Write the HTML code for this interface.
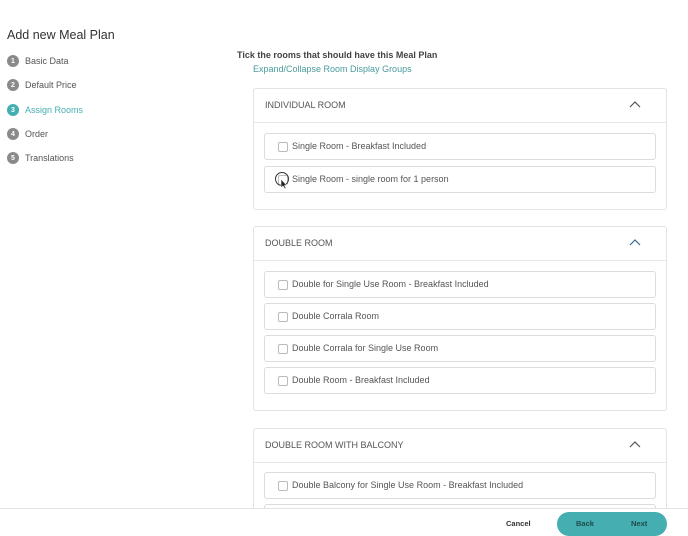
<!DOCTYPE html>
<html><head><style>
*{box-sizing:border-box;margin:0;padding:0}
html,body{width:688px;height:536px;overflow:hidden}
body{background:#fff;font-family:"Liberation Sans",sans-serif;color:#444;position:relative}
.a{position:absolute}
h1{position:absolute;left:7px;top:28px;font-size:12.5px;font-weight:normal;color:#333}
.step{position:absolute;left:7px;font-size:9px;color:#555;display:flex;align-items:center}
.step b{width:12px;height:12px;border-radius:50%;background:#8a8a8a;color:#fff;font-size:7px;display:inline-flex;align-items:center;justify-content:center;margin-right:6px}
.step.on{color:#45aeb1}.step.on b{background:#45aeb1}
.panel{position:absolute;left:253px;width:414px;border:1px solid #e3e3e3;border-radius:3px;background:#fff}
.ph{height:34px;border-bottom:1px solid #e8e8e8;font-size:9px;color:#555;padding:11px 0 0 11px;position:relative}
.ph svg{position:absolute;right:25px;top:12px}
.item{position:absolute;left:10px;width:392px;height:27px;border:1px solid #dcdcdc;border-radius:3px;font-size:9px;color:#555;padding:7px 0 0 27px}
.item:before{content:"";position:absolute;left:13px;top:8px;width:8px;height:8px;border:1px solid #bbb;border-radius:2px}
.footer{position:absolute;left:0;top:508px;width:688px;height:28px;border-top:1px solid #e3e3e3;background:#fff}
</style></head><body>
<h1>Add new Meal Plan</h1>
<div class="step" style="top:55px"><b>1</b>Basic Data</div>
<div class="step" style="top:79px"><b>2</b>Default Price</div>
<div class="step on" style="top:104px"><b>3</b>Assign Rooms</div>
<div class="step" style="top:128px"><b>4</b>Order</div>
<div class="step" style="top:152px"><b>5</b>Translations</div>
<div class="a" style="left:237px;top:50px;font-size:9px;font-weight:bold;color:#444">Tick the rooms that should have this Meal Plan</div>
<div class="a" style="left:253px;top:64px;font-size:9px;color:#4a9a9c">Expand/Collapse Room Display Groups</div>

<div class="panel" style="top:88px;height:122px">
<div class="ph">INDIVIDUAL ROOM<svg width="12" height="7" viewBox="0 0 12 7"><path d="M1 6L6 1L11 6" fill="none" stroke="#555" stroke-width="1.2"/></svg></div>
<div class="item" style="top:44px">Single Room - Breakfast Included</div>
<div class="item" style="top:77px">Single Room - single room for 1 person</div>
</div>
<div class="a" style="left:275px;top:172px;width:14px;height:14px;border:1.5px solid #333;border-radius:50%"></div>
<svg class="a" style="left:280px;top:178px" width="8" height="12" viewBox="0 0 8 12"><path d="M1 1L1 10L3 8L5 11L6 10L4.5 7.5L7 7.5Z" fill="#222" stroke="#fff" stroke-width=".6"/></svg>

<div class="panel" style="top:226px;height:185px">
<div class="ph">DOUBLE ROOM<svg width="12" height="7" viewBox="0 0 12 7"><path d="M1 6L6 1L11 6" fill="none" stroke="#3d6a8a" stroke-width="1.2"/></svg></div>
<div class="item" style="top:44px">Double for Single Use Room - Breakfast Included</div>
<div class="item" style="top:76px">Double Corrala Room</div>
<div class="item" style="top:108px">Double Corrala for Single Use Room</div>
<div class="item" style="top:140px">Double Room - Breakfast Included</div>
</div>

<div class="panel" style="top:428px;height:110px">
<div class="ph">DOUBLE ROOM WITH BALCONY<svg width="12" height="7" viewBox="0 0 12 7"><path d="M1 6L6 1L11 6" fill="none" stroke="#555" stroke-width="1.2"/></svg></div>
<div class="item" style="top:43px">Double Balcony for Single Use Room - Breakfast Included</div>
<div class="item" style="top:75px"></div>
</div>

<div class="footer">
<div class="a" style="left:506px;top:10px;font-size:7.5px;font-weight:bold;color:#333">Cancel</div>
<div class="a" style="left:557px;top:3px;width:110px;height:24px;border-radius:12px;background:#45aeb1"></div>
<div class="a" style="left:576px;top:10px;font-size:7.5px;font-weight:bold;color:#1e4a4b">Back</div>
<div class="a" style="left:631px;top:10px;font-size:7.5px;font-weight:bold;color:#1e4a4b">Next</div>
</div>
</body></html>
